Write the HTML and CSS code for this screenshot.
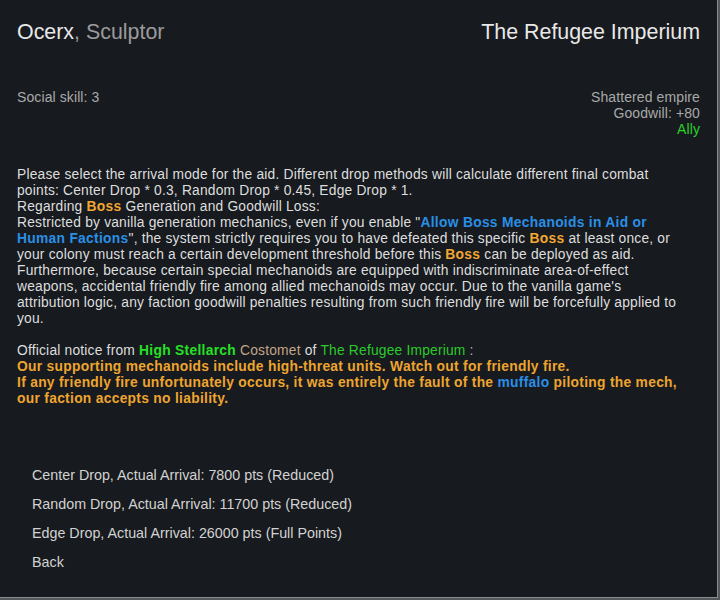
FILE: index.html
```html
<!DOCTYPE html>
<html>
<head>
<meta charset="utf-8">
<link rel="stylesheet" href="styles.css">
</head>
<body>
<div class="panel">
  <div class="head">
    <div class="name">Ocerx<span class="role">, Sculptor</span></div>
    <div class="faction">The Refugee Imperium</div>
  </div>
  <div class="info">
    <div class="skill">Social skill: 3</div>
    <div class="rel">
      <div>Shattered empire</div>
      <div>Goodwill: +80</div>
      <div class="ally">Ally</div>
    </div>
  </div>
  <div class="body">
    <p>Please select the arrival mode for the aid. Different drop methods will calculate different final combat<br>points: Center Drop * 0.3, Random Drop * 0.45, Edge Drop * 1.<br>Regarding <b class="or">Boss</b> Generation and Goodwill Loss:<br>Restricted by vanilla generation mechanics, even if you enable "<b class="bl">Allow Boss Mechanoids in Aid or<br>Human Factions</b>", the system strictly requires you to have defeated this specific <b class="or">Boss</b> at least once, or<br>your colony must reach a certain development threshold before this <b class="or">Boss</b> can be deployed as aid.<br>Furthermore, because certain special mechanoids are equipped with indiscriminate area-of-effect<br>weapons, accidental friendly fire among allied mechanoids may occur. Due to the vanilla game's<br>attribution logic, any faction goodwill penalties resulting from such friendly fire will be forcefully applied to<br>you.</p>
    <p>Official notice from <b class="gr">High Stellarch</b> <span class="tan">Costomet</span> of <span class="gr2">The Refugee Imperium</span> <span class="dim">:</span><br><b class="warn">Our supporting mechanoids include high-threat units. Watch out for friendly fire.<br>If any friendly fire unfortunately occurs, it was entirely the fault of the <span class="mu">muffalo</span> piloting the mech,<br>our faction accepts no liability.</b></p>
  </div>
  <div class="options">
    <div class="opt">Center Drop, Actual Arrival: 7800 pts (Reduced)</div>
    <div class="opt">Random Drop, Actual Arrival: 11700 pts (Reduced)</div>
    <div class="opt">Edge Drop, Actual Arrival: 26000 pts (Full Points)</div>
    <div class="opt">Back</div>
  </div>
</div>
</body>
</html>
```
FILE: styles.css
```css
html, body {
  margin: 0;
  padding: 0;
}
body {
  width: 720px;
  height: 600px;
  background: #55585a;
  font-family: "Liberation Sans", Arial, sans-serif;
  overflow: hidden;
}
.panel {
  box-sizing: border-box;
  width: 718px;
  height: 598px;
  background: #171a1e;
  border-right: 1px solid #8a8c8e;
  border-bottom: 1px solid #8a8c8e;
  padding: 20px 17px 0 17px;
}
.head {
  display: flex;
  justify-content: space-between;
  font-size: 21.4px;
  line-height: 24px;
  color: #e8e8e8;
}
.role {
  color: #9b9b9b;
}
.info {
  display: flex;
  justify-content: space-between;
  margin-top: 45px;
  font-size: 14px;
  line-height: 16px;
  letter-spacing: 0.1px;
  color: #a9a9a9;
}
.rel {
  text-align: right;
}
.ally {
  color: #2bd12b;
}
.body {
  margin-top: 30px;
  font-size: 13.8px;
  line-height: 16px;
  letter-spacing: 0.2px;
  color: #dedede;
}
.body p {
  margin: 0 0 16px 0;
  white-space: nowrap;
}
.body b {
  letter-spacing: 0.3px;
}
.or { color: #f2a833; }
.bl { color: #2a8fe6; }
.gr { color: #26e026; }
.gr2 { color: #2bcb2b; }
.tan { color: #c4a689; }
.dim { color: #b5b5b5; }
.warn { color: #eda530; }
.mu { color: #2a8fe6; }
.options {
  margin-top: 54px;
  padding-left: 15px;
  font-size: 14.3px;
  color: #d2d2d2;
}
.opt {
  height: 29px;
  line-height: 29px;
}
```
